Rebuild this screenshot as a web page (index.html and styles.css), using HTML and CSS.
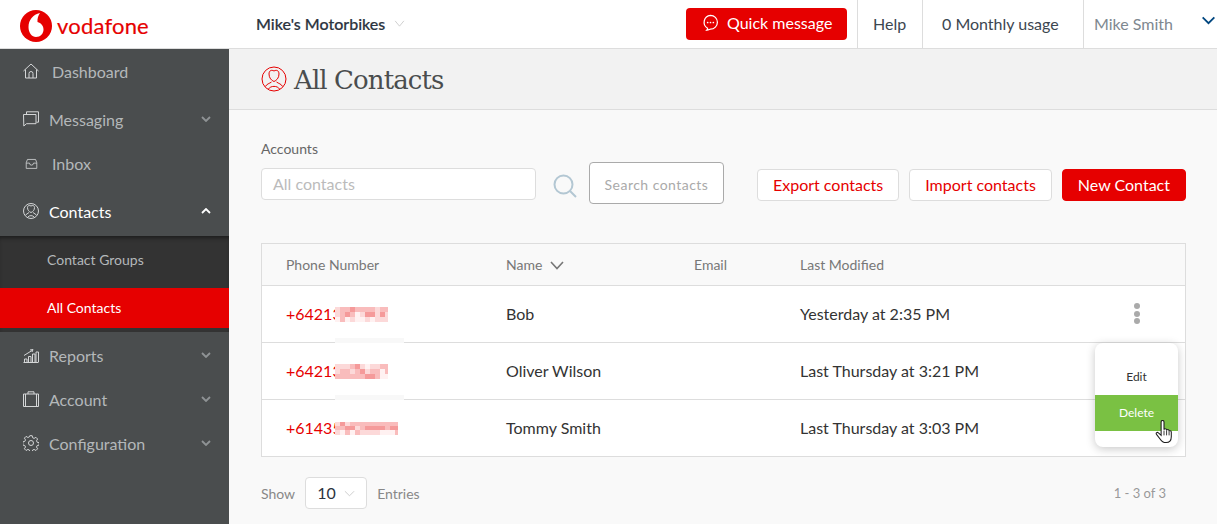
FILE: index.html
```html
<!DOCTYPE html>
<html lang="en">
<head>
<meta charset="utf-8">
<title>All Contacts</title>
<link rel="stylesheet" href="styles.css">
</head>
<body>
<header class="topbar">
  <div class="brand">
    <svg class="brand-mark" viewBox="0 0 32 32"><circle cx="16" cy="16" r="16" fill="#e60000"/><path fill="#fff" d="M20 3C13 4.500 8.500 10 8.500 17c0 6 3.500 10 7.500 10 4.500 0 7.500-3.500 7.500-7.500 0-4-2.500-6.500-6-7.500-.3-3.500.7-6.500 2.500-9z"/></svg>
    <span class="brand-name">vodafone</span>
  </div>
  <div class="org">Mike's Motorbikes
    <svg class="org-chev" viewBox="0 0 12 8"><path d="M1 1l5 6 5-6" fill="none" stroke="#c9c9c9" stroke-width="1"/></svg>
  </div>
  <div class="top-right">
    <button class="quick">
      <svg class="quick-icon" viewBox="0 0 18 18"><path d="M9 1.500a7.300 7.300 0 0 1 0 14.600c-.9 0-1.500.6-3.800.9.700-.7.800-1.300.7-1.900A7.300 7.300 0 0 1 9 1.500z" fill="none" stroke="#fff" stroke-width="1.300"/><circle cx="6" cy="9" r=".9" fill="#fff"/><circle cx="9" cy="9" r=".9" fill="#fff"/><circle cx="12" cy="9" r=".9" fill="#fff"/></svg>
      Quick message
    </button>
    <div class="top-cell help">Help</div>
    <div class="top-cell usage">0 Monthly usage</div>
    <div class="top-cell user"><span>Mike Smith</span>
      <svg class="user-chev" viewBox="0 0 16 10"><path d="M1.500 1.500L8 8l6.500-6.500" fill="none" stroke="#00467f" stroke-width="2"/></svg>
    </div>
  </div>
</header>

<div class="shell">
  <nav class="sidebar">
    <a class="nav-item gap-after">
      <svg class="nav-icon" viewBox="0 0 16 16"><path d="M.5 8L8 1l7.500 7M2.500 6.500V15h11V6.500M6 15v-4.500a2 2 0 0 1 4 0V15"/></svg>
      <span class="label wide-label">Dashboard</span>
    </a>
    <a class="nav-item">
      <svg class="nav-icon" viewBox="0 0 16 16"><path d="M3.500 3V.8h12v10.400h-2"/><path d="M.5 3.500h12.500v9.200H3.500L.8 15z"/></svg>
      <span class="label">Messaging</span>
      <svg class="chev" viewBox="0 0 10 6"><path d="M1 1l4 4 4-4"/></svg>
    </a>
    <a class="nav-item gap-after">
      <svg class="nav-icon small" viewBox="0 0 16 16"><path d="M3 3h10l1.500 4v7h-13V7z"/><path d="M1.500 7.500h4a2.500 2.500 0 0 0 5 0h4"/></svg>
      <span class="label">Inbox</span>
    </a>
    <a class="nav-item active">
      <svg class="nav-icon" viewBox="0 0 16 16"><circle cx="8" cy="8" r="7.500"/><path d="M4.500 4.500c0-2 1.800-2.500 3.500-1.500 1.700-1 3.500-.5 3.500 1.500 0 2.500-1.500 4.300-3.500 5-2-.7-3.500-2.500-3.500-5zM6 9.500l-3.500 2.500M10 9.500l3.500 2.500M5 14c1-1.800 5-1.800 6 0"/></svg>
      <span class="label">Contacts</span>
      <svg class="chev up" viewBox="0 0 10 6"><path d="M1 5l4-4 4 4"/></svg>
    </a>
    <div class="submenu">
      <a class="sub-item">Contact Groups</a>
      <a class="sub-item current">All Contacts</a>
    </div>
    <a class="nav-item">
      <svg class="nav-icon" viewBox="0 0 16 16"><path d="M.5 15.500h15M1.500 15v-3h2.500v3M5.500 15V9.500H8V15M9.500 15V7h2.500v8M13 15V5h2.500v10M1 8.500L9 3.500M7 3l3-.5-1 2.500"/></svg>
      <span class="label">Reports</span>
      <svg class="chev" viewBox="0 0 10 6"><path d="M1 1l4 4 4-4"/></svg>
    </a>
    <a class="nav-item">
      <svg class="nav-icon" viewBox="0 0 16 16"><path d="M.5 3h15v12.500H.5zM2.500 3v12.500M13.500 3v12.500M5 3V.8h6V3"/></svg>
      <span class="label">Account</span>
      <svg class="chev" viewBox="0 0 10 6"><path d="M1 1l4 4 4-4"/></svg>
    </a>
    <a class="nav-item">
      <svg class="nav-icon" viewBox="0 0 16 16"><circle cx="8" cy="8" r="2.500"/><path d="M6.800.7h2.400l.4 2 1.500.7 1.800-1.100 1.700 1.700-1.100 1.800.7 1.500 2 .4v2.400l-2 .4-.7 1.500 1.100 1.800-1.700 1.700-1.800-1.100-1.500.7-.4 2H6.800l-.4-2-1.500-.7-1.800 1.100-1.700-1.700 1.100-1.800-.7-1.500-2-.4V6.800l2-.4.7-1.500-1.100-1.800 1.700-1.700 1.800 1.100 1.500-.7z"/></svg>
      <span class="label">Configuration</span>
      <svg class="chev" viewBox="0 0 10 6"><path d="M1 1l4 4 4-4"/></svg>
    </a>
  </nav>

  <main class="main">
    <div class="page-head">
      <svg class="page-icon" viewBox="0 0 26 26"><g fill="none" stroke="#e60000" stroke-width="1"><circle cx="13" cy="13" r="12"/><path d="M8 8c0-3.500 2.500-4.500 5-3 2.500-1.500 5-.5 5 3 0 4-2.500 6.500-5 7.500-2.500-1-5-3.500-5-7.500zM4.500 20.500c1-2.500 4-3 6-4.500M21.500 20.500c-1-2.500-4-3-6-4.500M7.500 23c2-3.500 9-3.500 11 0"/></g></svg>
      <h1 class="page-title">All Contacts</h1>
    </div>

    <div class="content">
      <div class="toolbar">
        <div class="field">
          <label class="field-label">Accounts</label>
          <div class="fake-input">All contacts</div>
        </div>
        <svg class="search-icon" viewBox="0 0 24 24"><circle cx="10.500" cy="10.500" r="9" fill="none" stroke="#b3c7d3" stroke-width="2"/><path d="M17 17l6 6" stroke="#b3c7d3" stroke-width="2"/></svg>
        <button class="search-btn">Search contacts</button>
        <div class="actions">
          <button class="btn">Export contacts</button>
          <button class="btn">Import contacts</button>
          <button class="btn primary">New Contact</button>
        </div>
      </div>

      <div class="table">
        <div class="row head">
          <div class="cell first">Phone Number</div>
          <div class="cell">Name <svg class="sort" viewBox="0 0 14 9"><path d="M1 1l6 6.500L13 1" fill="none" stroke="#777" stroke-width="1.600"/></svg></div>
          <div class="cell">Email</div>
          <div class="cell">Last Modified</div>
        </div>
        <div class="row">
          <div class="cell first phone">+64213</div>
          <svg class="mosaic m-short" viewBox="0 0 53 15"><rect width="53" height="15" class="p2"/><path class="p1" d="M0 0h5v5H0zM40 0h5v5h-5zM0 5h5v5H0zM25 5h5v5h-5zM40 5h5v5h-5zM50 5h3v5h-3zM15 10h5v5h-5zM30 10h5v5h-5zM40 10h13v5H40z"/><path class="p3" d="M15 0h5v5h-5zM30 5h10v5H30zM10 5h5v5h-5zM45 5h5v5h-5z"/><path class="p0" d="M20 5h5v5h-5zM0 10h5v5H0zM10 10h5v5h-5zM20 10h10v5H20zM35 10h5v5h-5z"/></svg>
          <div class="cell">Bob</div>
          <div class="cell"></div>
          <div class="cell">Yesterday at 2:35 PM</div>
          <div class="kebab"><i></i><i></i><i></i></div>
          <span class="smudge"></span>
        </div>
        <div class="row">
          <div class="cell first phone">+64213</div>
          <svg class="mosaic m-short" viewBox="0 0 53 15"><rect width="53" height="15" class="p2"/><path class="p1" d="M0 0h15v5H0zM25 0h5v5h-5zM35 0h10v5H35zM0 5h5v5H0zM15 5h5v5h-5zM30 5h5v5h-5z"/><path class="p3" d="M20 0h5v5h-5zM30 10h10v5H30zM25 5h5v5h-5z"/><path class="p0" d="M30 0h5v5h-5zM45 5h5v5h-5zM45 10h8v5h-8z"/></svg>
          <div class="cell">Oliver Wilson</div>
          <div class="cell"></div>
          <div class="cell">Last Thursday at 3:21 PM</div>
          <span class="smudge"></span>
        </div>
        <div class="row">
          <div class="cell first phone">+61435</div>
          <svg class="mosaic m-long" viewBox="0 0 63 13"><rect width="63" height="13" class="p2"/><path class="p1" d="M0 0h5v4H0zM10 0h5v4h-5zM20 4h5v4h-5zM25 8h20v5H25zM0 8h5v5H0z"/><path class="p3" d="M5 0h5v4H5zM30 4h20v4H30zM55 4h8v4h-8zM10 4h10v4H10z"/><path class="p0" d="M5 8h5v5H5zM15 8h5v5h-5zM45 8h15v5H45z"/></svg>
          <div class="cell">Tommy Smith</div>
          <div class="cell"></div>
          <div class="cell">Last Thursday at 3:03 PM</div>
        </div>

        <div class="menu">
          <div class="menu-item">Edit</div>
          <div class="menu-item hover">Delete</div>
        </div>
        <svg class="cursor" viewBox="0 0 18 25"><path d="M6 2a1.500 1.500 0 0 1 3 0v8.200c0-1.500 2.600-1.500 2.700 0v.8c0-1.400 2.500-1.400 2.600.2v.8c.1-1.200 2.300-1 2.300.5v5c0 3-1.500 6-5.500 6-3 0-4.500-1-6-3.500L1.200 15c-1-1.500.8-2.800 2-1.600L6 16z" fill="#fff" stroke="#1c1c1c" stroke-width="1.100"/><path d="M9 11v5M11.700 11v5M14.300 12v4" stroke="#1c1c1c" stroke-width=".9"/></svg>
      </div>

      <div class="pager">
        <span class="muted">Show</span>
        <div class="page-size"><span class="size-value">10</span> <svg class="size-chev" viewBox="0 0 12 7"><path d="M1 1l5 5 5-5" fill="none" stroke="#c9c9c9"/></svg></div>
        <span class="muted">Entries</span>
        <span class="count">1 - 3 of 3</span>
      </div>
    </div>
  </main>
</div>
</body>
</html>
```

FILE: styles.css
```css
* { box-sizing: border-box; }
html, body { margin: 0; height: 100%; overflow: hidden; }
body { font-family: Lato, "Liberation Sans", sans-serif; font-size: 16px; color: #333; background: #f9f9f9; }
button { font-family: inherit; cursor: pointer; }

.topbar { height: 49px; display: flex; align-items: center; background: #fff; border-bottom: 1px solid #ddd; }
.brand { width: 256px; padding-left: 20px; display: flex; align-items: center; gap: 5px; flex: none; }
.brand-mark { width: 32px; height: 32px; margin-top: 4px; }
.brand-name { font-size: 22px; color: #e60000; letter-spacing: .2px; -webkit-text-stroke: .2px #e60000; position: relative; top: 1px; }
.org { padding-bottom: 2px; font-weight: 500; font-size: 16px; color: #2c3440; display: flex; align-items: center; gap: 9px; -webkit-text-stroke: .2px #2c3440; }
.org-chev { width: 11px; height: 7px; }
.top-right { margin-left: auto; display: flex; align-items: stretch; height: 48px; }
.quick { align-self: center; width: 161px; height: 32px; margin-right: 10px; padding: 0 0 3px 16px; display: flex; align-items: center; gap: 8px; background: #e60000; color: #fff; border: 0; border-radius: 4px; font-size: 16px; }
.quick-icon { width: 17px; height: 17px; }
.top-cell { display: flex; align-items: center; padding-bottom: 2px; border-left: 1px solid #ddd; }
.help { width: 65px; padding-left: 15px; color: #3c4650; }
.usage { width: 161px; padding-left: 19px; color: #3c4650; }
.user { width: 134px; padding-left: 10px; color: #7e8890; position: relative; }
.user-chev { position: absolute; left: 117px; top: 16px; width: 15px; height: 9px; }

.shell { display: flex; height: calc(100vh - 49px); }
.sidebar { width: 229px; flex: none; background: #4a4d4e; }
.nav-item { height: 44px; display: flex; align-items: center; padding-left: 23px; color: #b4b8ba; }
.nav-item.gap-after { margin-bottom: 4px; }
.nav-item.active { color: #fff; }
.nav-icon { width: 16px; height: 16px; margin-right: 10px; flex: none; fill: none; stroke: #d4d6d7; stroke-width: 1; }
.nav-icon.small { width: 13px; height: 13px; margin-left: 2px; margin-right: 14px; }
.wide-label { margin-left: 3px; }
.label { flex: 1; }
.chev { width: 10px; height: 6px; margin-right: 18px; fill: none; stroke: #8f9395; stroke-width: 1.800; }
.chev.up { stroke: #fff; }
.submenu { margin: 3px 0 1px; padding: 4px 0; display: flex; flex-direction: column; gap: 8px; background: #333; box-shadow: inset 0 4px 4px -2px rgba(0,0,0,.45); }
.sub-item { height: 40px; display: flex; align-items: center; padding: 0 0 2px 47px; font-size: 14px; color: #b4b8ba; }
.sub-item.current { background: #e60000; color: #fff; }

.main { flex: 1; min-width: 0; }
.page-head { height: 61px; display: flex; align-items: center; padding-left: 32px; background: #f2f2f2; border-bottom: 1px solid #ddd; }
.page-icon { width: 26px; height: 26px; margin-right: 7px; flex: none; }
.page-title { margin: 0; padding-top: 2px; font: 400 26px "DejaVu Serif", "Liberation Serif", serif; letter-spacing: -.9px; color: #4a4d4e; }

.content { padding: 0 31px 0 32px; }
.toolbar { height: 133px; display: flex; position: relative; }
.field { width: 275px; padding-top: 30px; }
.field-label { display: block; font-size: 14px; line-height: 17px; color: #666; margin-bottom: 11px; }
.fake-input { height: 32px; padding: 0 0 2px 11px; display: flex; align-items: center; background: #fff; border: 1px solid #ddd; border-radius: 4px; color: #bbb; font-size: 16px; }
.search-icon { width: 24px; height: 24px; margin: 64px 0 0 17px; flex: none; }
.search-btn { width: 135px; height: 42px; margin: 52px 0 0 12px; background: #fff; border: 1px solid #aaa; border-radius: 4px; color: #aaa; font-size: 14px; letter-spacing: .47px; padding: 2px 0 0; }
.actions { margin: 59px 0 0 auto; display: flex; gap: 10px; align-items: flex-start; }
.btn { height: 32px; padding: 0 15px 2px; background: #fff; border: 1px solid #ddd; border-radius: 4px; color: #e60000; font-size: 16px; }
.btn.primary { background: #e60000; border-color: #e60000; color: #fff; }

.table { position: relative; border: 1px solid #ddd; border-bottom: 0; background: #fff; }
.row { position: relative; display: grid; grid-template-columns: 244px 188px 106px 1fr; height: 57px; align-items: center; border-bottom: 1px solid #ddd; }
.row.head { height: 42px; background: #f9f9f9; font-size: 14px; color: #777; }
.cell { white-space: nowrap; padding-bottom: 2px; }
.row.head .cell { padding-bottom: 0; }
.first { padding-left: 24px; }
.phone { color: #e60000; }
.sort { width: 14px; height: 9px; margin-left: 4px; }
.mosaic { position: absolute; display: block; left: 73px; shape-rendering: crispEdges; }
.m-short { top: 21px; width: 53px; height: 15px; }
.m-long { top: 22px; width: 63px; height: 13px; }
.p0 { fill: #fff1f1; }
.p1 { fill: #fcd9d9; }
.p2 { fill: #f9bcbc; }
.p3 { fill: #f59a9a; }
.smudge { position: absolute; left: 73px; bottom: -1px; width: 69px; height: 5px; background: #f8f8f8; }
.kebab { position: absolute; right: 45px; top: 17px; display: flex; flex-direction: column; gap: 1.500px; }
.kebab i { display: block; width: 6px; height: 6px; border-radius: 50%; background: #aaa; }
.menu { position: absolute; left: 833px; top: 99px; width: 83px; height: 104px; padding-top: 16px; background: #fff; border-radius: 8px; box-shadow: 0 2px 10px rgba(0,0,0,.22); overflow: hidden; }
.menu-item { height: 36px; display: flex; align-items: center; justify-content: center; padding-bottom: 2px; font-size: 12px; color: #333; }
.menu-item.hover { background: #7ac143; color: #fff; }
.cursor { position: absolute; left: 893px; top: 176px; width: 18px; height: 24px; }

.pager { display: flex; align-items: center; height: 32px; margin-top: 20px; font-size: 14px; }
.muted { color: #888; }
.page-size { width: 62px; height: 32px; margin: 0 10px; padding-left: 11px; display: flex; align-items: center; gap: 8px; background: #fff; border: 1px solid #ddd; border-radius: 4px; font-size: 16px; color: #2c3440; }
.size-value { padding-bottom: 2px; }
.size-chev { width: 11px; height: 7px; }
.count { margin-left: auto; margin-right: 20px; font-size: 13px; color: #999; }
```
